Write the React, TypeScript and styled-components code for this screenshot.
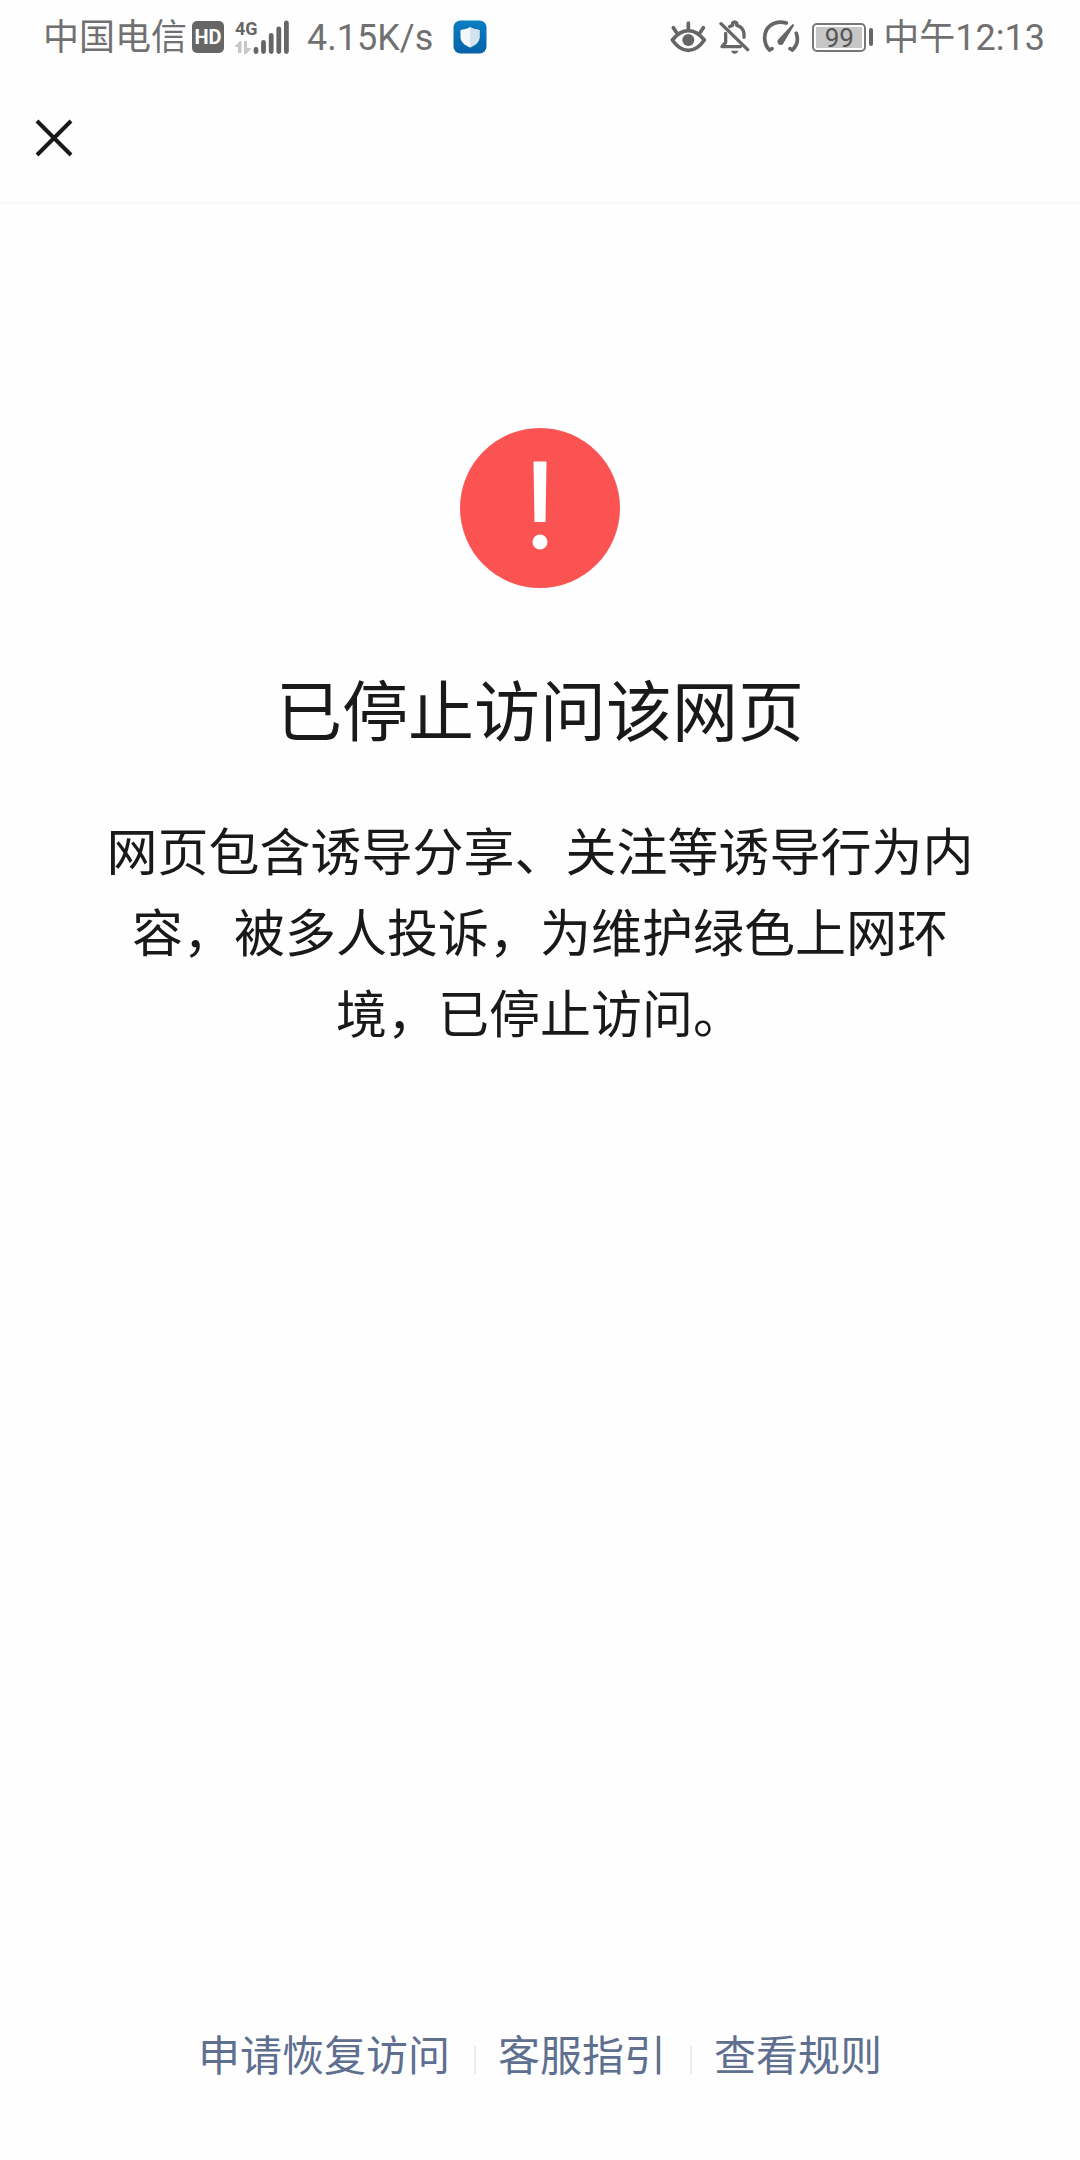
import React from "react";
import styled, { createGlobalStyle } from "styled-components";

const GlobalStyle = createGlobalStyle`
  * { box-sizing: border-box; }
  body {
    margin: 0;
    background: #fefefe;
    color: #191919;
    font-family: Roboto, "Noto Sans CJK SC", sans-serif;
  }
`;

const Screen = styled.div`
  display: flex;
  flex-direction: column;
  min-height: 100vh;
`;

const StatusBar = styled.header`
  display: flex;
  justify-content: space-between;
  align-items: center;
  height: 74px;
  padding: 0 35px 0 43px;
  color: #707070;
`;

const StatusGroup = styled.div`
  display: flex;
  align-items: center;
`;

const StatusIcons = styled.div`
  display: flex;
  align-items: center;
  gap: 12px;
  margin-right: 10px;
`;

const StatusText = styled.span`
  padding-top: 2px;
  font-size: 36px;
  line-height: 40px;
  font-weight: 400;
  white-space: nowrap;
`;

const Carrier = styled(StatusText)`
  margin-right: 5px;
`;

const HdBadge = styled.span`
  display: flex;
  align-items: center;
  justify-content: center;
  width: 32px;
  height: 32px;
  border-radius: 5px;
  background: #666;
  color: #fff;
  font-size: 20px;
  line-height: 20px;
  font-weight: 700;
`;

const Signal = styled.div`
  display: flex;
  align-items: flex-end;
  height: 34px;
  margin: 0 18px 0 11px;
`;

const Network = styled.div`
  display: flex;
  flex-direction: column;
  justify-content: space-between;
  width: 18px;
  height: 34px;
  color: #666;
  font-size: 18px;
  line-height: 18px;
  font-weight: 700;
`;

const ShieldIcon = styled.svg`
  margin-left: 20px;
`;

const Battery = styled.div`
  display: flex;
  align-items: center;
  gap: 3px;
`;

const BatteryBody = styled.div`
  width: 54px;
  height: 29px;
  padding: 2px;
  border: 2px solid #777;
  border-radius: 5px;
`;

const BatteryFill = styled.div`
  height: 100%;
  background: #c6c6c6;
  color: #555;
  font-size: 26px;
  line-height: 22px;
  text-align: center;
`;

const BatteryTip = styled.div`
  width: 4px;
  height: 18px;
  border-radius: 2px;
  background: #666;
`;

const NavBar = styled.nav`
  display: flex;
  align-items: center;
  height: 130px;
  padding: 0 24px;
  border-bottom: 2px solid #f8f8f8;
`;

const CloseButton = styled.button`
  display: flex;
  align-items: center;
  justify-content: center;
  width: 60px;
  height: 60px;
  padding: 0;
  border: 0;
  background: none;
  color: #191919;
`;

const Message = styled.main`
  display: flex;
  flex: 1;
  flex-direction: column;
  align-items: center;
  padding: 224px 96px 0;
  text-align: center;
`;

const Title = styled.h1`
  margin: 80px 0 0;
  font-size: 66px;
  line-height: 92px;
  font-weight: 400;
`;

const Description = styled.p`
  margin: 53px 0 0;
  font-size: 51px;
  line-height: 81px;
`;

const Footer = styled.footer`
  display: flex;
  justify-content: center;
  align-items: center;
  padding-bottom: 73px;
`;

const FooterLink = styled.a`
  padding: 0 24px;
  color: #5f6f90;
  font-size: 42px;
  line-height: 60px;
  text-decoration: none;

  & + & {
    background: linear-gradient(#ececec, #ececec) no-repeat 0 19px / 2px 28px;
  }
`;

const links = ["申请恢复访问", "客服指引", "查看规则"];

export default function App() {
  return (
    <Screen>
      <GlobalStyle />
      <StatusBar>
        <StatusGroup>
          <Carrier>中国电信</Carrier>
          <HdBadge>HD</HdBadge>
          <Signal>
            <Network>
              <span>4G</span>
              <svg width="17" height="13" viewBox="0 0 17 13" fill="#c8c8c8">
                <path d="M6.500 0v12H3V6H0v-1L5 0zM9 0h3v7h4v1l-5 5H9z" />
              </svg>
            </Network>
            <svg width="36" height="34" viewBox="0 0 36 34" stroke="#666" strokeWidth="4.8" strokeLinecap="round">
              <path d="M3 29.500v2M10.500 22.500v9M18.200 15.500v16M25.800 9v22.500M33.400 3v28.500" />
            </svg>
          </Signal>
          <StatusText>4.15K/s</StatusText>
          <ShieldIcon width="34" height="34" viewBox="0 0 34 34">
            <defs>
              <linearGradient id="shield-tile" x1="0" y1="0" x2="0" y2="1">
                <stop offset="0" stopColor="#0b7fc0" />
                <stop offset="1" stopColor="#0561a8" />
              </linearGradient>
            </defs>
            <rect x="0.500" y="0.500" width="33" height="33" rx="7" fill="url(#shield-tile)" />
            <path d="M17 7C20 9 23 9 26.500 10v7c0 5-4 8-9.500 10.500C11.500 25 7.500 22 7.500 17v-7C11 9 14 9 17 7z" fill="#f2f8fb" />
            <path d="M17 7C20 9 23 9 26.500 10v7c0 5-4 8-9.500 10.500z" fill="#d3e4ee" />
          </ShieldIcon>
        </StatusGroup>
        <StatusGroup>
          <StatusIcons>
            <svg width="37" height="34" viewBox="59 59 111 102" fill="none" stroke="#666" strokeWidth="11" strokeLinecap="round" strokeLinejoin="round">
              <path d="M66 119Q88 91 114 91T162 119Q141 150 114 150T66 119zM114 86V68M78 96L69 82M150 96l9-14" />
              <circle cx="114" cy="119" r="18" fill="#666" stroke="none" />
            </svg>
            <svg width="31" height="34" viewBox="207 59 93 102" fill="none" stroke="#666" strokeWidth="10" strokeLinecap="round" strokeLinejoin="round">
              <path d="M213 70L293 148M271 139H216L227 126V99M239 79Q244 76 248 75V68Q254 62 260 68V75Q280 80 282 100V111" />
              <path d="M243 151H265Q262 160 254 160T243 151z" fill="#666" stroke="none" />
            </svg>
            <svg width="38" height="34" viewBox="333 59 114 102" fill="none" stroke="#666" strokeWidth="11" strokeLinecap="round" strokeLinejoin="round">
              <path d="M406 68C368 57 340 82 341 114Q342 137 356 149M356 149l7-4M436 99Q446 128 424 149M424 149l-7-4" />
              <path d="M425 71L430 74L399 126A10 10 0 1 1 383 116z" fill="#666" stroke="none" />
            </svg>
            <Battery>
              <BatteryBody>
                <BatteryFill>99</BatteryFill>
              </BatteryBody>
              <BatteryTip />
            </Battery>
          </StatusIcons>
          <StatusText>中午12:13</StatusText>
        </StatusGroup>
      </StatusBar>
      <NavBar>
        <CloseButton type="button" aria-label="关闭">
          <svg width="38" height="38" viewBox="0 0 38 38" stroke="currentColor" strokeWidth="4">
            <path d="M2 2l34 34M36 2L2 36" />
          </svg>
        </CloseButton>
      </NavBar>
      <Message>
        <svg width="160" height="160" viewBox="0 0 160 160" aria-hidden="true">
          <circle cx="80" cy="80" r="80" fill="#fa5352" />
          <path d="M73.500 33.500h13L85.500 94h-11z" fill="#fff" />
          <circle cx="80" cy="114" r="7.500" fill="#fff" />
        </svg>
        <Title>已停止访问该网页</Title>
        <Description>
          网页包含诱导分享、关注等诱导行为内容，被多人投诉，为维护绿色上网环境，已停止访问。
        </Description>
      </Message>
      <Footer>
        {links.map((label) => (
          <FooterLink key={label} href="#">
            {label}
          </FooterLink>
        ))}
      </Footer>
    </Screen>
  );
}
